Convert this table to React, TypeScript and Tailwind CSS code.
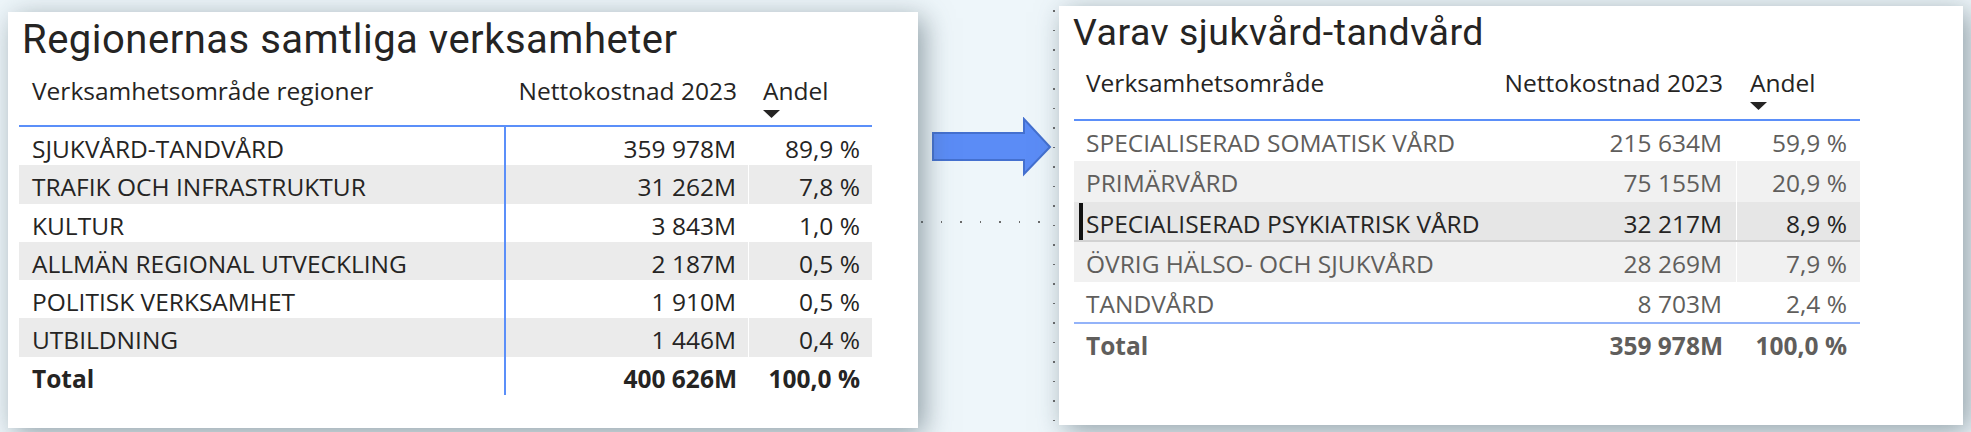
import React from 'react';

interface Row {
  label: string;
  value: string;
  share: string;
  tone?: 'even' | 'odd' | 'selected';
}

const regionRows: Row[] = [
  { label: 'SJUKVÅRD-TANDVÅRD', value: '359 978M', share: '89,9 %' },
  { label: 'TRAFIK OCH INFRASTRUKTUR', value: '31 262M', share: '7,8 %' },
  { label: 'KULTUR', value: '3 843M', share: '1,0 %' },
  { label: 'ALLMÄN REGIONAL UTVECKLING', value: '2 187M', share: '0,5 %' },
  { label: 'POLITISK VERKSAMHET', value: '1 910M', share: '0,5 %' },
  { label: 'UTBILDNING', value: '1 446M', share: '0,4 %' },
];

const careRows: Row[] = [
  { label: 'SPECIALISERAD SOMATISK VÅRD', value: '215 634M', share: '59,9 %', tone: 'odd' },
  { label: 'PRIMÄRVÅRD', value: '75 155M', share: '20,9 %', tone: 'even' },
  { label: 'SPECIALISERAD PSYKIATRISK VÅRD', value: '32 217M', share: '8,9 %', tone: 'selected' },
  { label: 'ÖVRIG HÄLSO- OCH SJUKVÅRD', value: '28 269M', share: '7,9 %', tone: 'even' },
  { label: 'TANDVÅRD', value: '8 703M', share: '2,4 %', tone: 'odd' },
];

const SortArrow = () => (
  <svg width="17" height="8" viewBox="0 0 17 8" className="mt-[3px]">
    <path d="M0 0 H17 L8.5 8 Z" fill="#252423" />
  </svg>
);

const BlueArrow = () => (
  <svg width="122" height="60" viewBox="0 0 122 60">
    <path
      d="M2 16 H93 V2 L119 30 L93 57 V43 H2 Z"
      fill="#5b8cf6"
      stroke="#4470cf"
      strokeWidth="2"
    />
  </svg>
);

const Dots = ({ count, vertical }: { count: number; vertical?: boolean }) => (
  <div className={vertical ? 'flex flex-col gap-[18px]' : 'flex gap-[18px]'}>
    {Array.from({ length: count }).map((_, i) => (
      <div key={i} className="w-[1.5px] h-[1.5px] bg-[#6b6b6b]" />
    ))}
  </div>
);

export default function App() {
  return (
    <div className="relative w-[1971px] h-[432px] overflow-hidden bg-[#eef6fa] flex font-['Open_Sans',sans-serif]">
      {/* canvas grid dots */}
      <div className="absolute left-[921px] top-[221px]">
        <Dots count={7} />
      </div>
      <div className="absolute left-[1053px] top-[10px]">
        <Dots count={22} vertical />
      </div>

      {/* Left card */}
      <div className="relative z-10 ml-[8px] mt-[12px] w-[910px] h-[416px] bg-white shadow-[6px_6px_26px_rgba(70,90,100,0.55)] flex flex-col">
        <h1 className="pl-[14px] pt-[5px] h-[58px] text-[40px] leading-[46px] text-[#252423] font-['Roboto',sans-serif] tracking-[0.5px]">
          Regionernas samtliga verksamheter
        </h1>

        <div className="ml-[11px] w-[853px] flex flex-col text-[24.5px] text-[#252423]">
          {/* header */}
          <div className="flex h-[57px] border-b-2 border-[#5b8ff9]">
            <div className="w-[487px] pl-[13px] pt-[5px] leading-[32px]">Verksamhetsområde regioner</div>
            <div className="w-[243px] pr-[12px] pt-[5px] leading-[32px] text-right whitespace-nowrap">Nettokostnad 2023</div>
            <div className="w-[123px] pl-[14px] pt-[5px] flex flex-col">
              <span className="leading-[32px]">Andel</span>
              <SortArrow />
            </div>
          </div>

          {regionRows.map((r, i) => (
            <div key={r.label} className={`flex h-[38.3px] leading-[38px] ${i % 2 === 1 ? 'bg-[#ebebeb]' : 'bg-white'}`}>
              <div className="w-[487px] pl-[13px] pt-[3px] border-r-2 border-[#5b8ff9] whitespace-nowrap">{r.label}</div>
              <div className="w-[243px] pr-[12px] pt-[3px] text-right border-r border-white">{r.value}</div>
              <div className="w-[123px] pr-[12px] pt-[3px] text-right">{r.share}</div>
            </div>
          ))}

          <div className="flex h-[38.3px] leading-[38px] font-bold">
            <div className="w-[487px] pl-[13px] pt-[3px] border-r-2 border-[#5b8ff9]">Total</div>
            <div className="w-[243px] pr-[12px] pt-[3px] text-right">400 626M</div>
            <div className="w-[123px] pr-[12px] pt-[3px] text-right">100,0 %</div>
          </div>
        </div>
      </div>

      {/* Arrow */}
      <div className="w-[141px] flex justify-center pl-[6px] pt-[117px]">
        <div className="h-[60px]">
          <BlueArrow />
        </div>
      </div>

      {/* Right card */}
      <div className="relative z-10 mt-[6px] w-[904px] h-[419px] bg-white shadow-[6px_6px_26px_rgba(70,90,100,0.55)] flex flex-col">
        <h1 className="pl-[14px] pt-[5px] h-[54px] text-[37.5px] leading-[42px] text-[#252423] font-['Roboto',sans-serif] tracking-[0.5px]">
          Varav sjukvård-tandvård
        </h1>

        <div className="ml-[15px] w-[786px] flex flex-col text-[24.5px] text-[#605e5c]">
          <div className="flex h-[61px] border-b-2 border-[#5b8ff9] text-[#252423]">
            <div className="w-[420px] pl-[12px] pt-[7px] leading-[32px]">Verksamhetsområde</div>
            <div className="w-[243px] pr-[14px] pt-[7px] leading-[32px] text-right whitespace-nowrap">Nettokostnad 2023</div>
            <div className="w-[123px] pl-[13px] pt-[7px] flex flex-col">
              <span className="leading-[32px]">Andel</span>
              <SortArrow />
            </div>
          </div>

          {careRows.map((r) => {
            const selected = r.tone === 'selected';
            const bg = selected ? 'bg-[#e6e6e6] border-b-2 border-[#d2d2d2]' : r.tone === 'even' ? 'bg-[#f1f1f1]' : 'bg-white';
            return (
              <div key={r.label} className={`relative flex h-[40.3px] leading-[40px] ${bg} ${selected ? 'text-[#252423]' : ''}`}>
                {selected && <div className="absolute left-[5px] top-[1px] w-[4px] h-[37px] bg-[#111]" />}
                <div className="w-[420px] pl-[12px] pt-[2px] whitespace-nowrap">{r.label}</div>
                <div className="w-[243px] pr-[14px] pt-[2px] text-right border-r border-white">{r.value}</div>
                <div className="w-[123px] pr-[13px] pt-[2px] text-right">{r.share}</div>
              </div>
            );
          })}

          <div className="flex h-[40px] leading-[40px] font-bold border-t-2 border-[#93b3f9]">
            <div className="w-[420px] pl-[12px] pt-[2px]">Total</div>
            <div className="w-[243px] pr-[14px] pt-[2px] text-right">359 978M</div>
            <div className="w-[123px] pr-[13px] pt-[2px] text-right">100,0 %</div>
          </div>
        </div>
      </div>
    </div>
  );
}
